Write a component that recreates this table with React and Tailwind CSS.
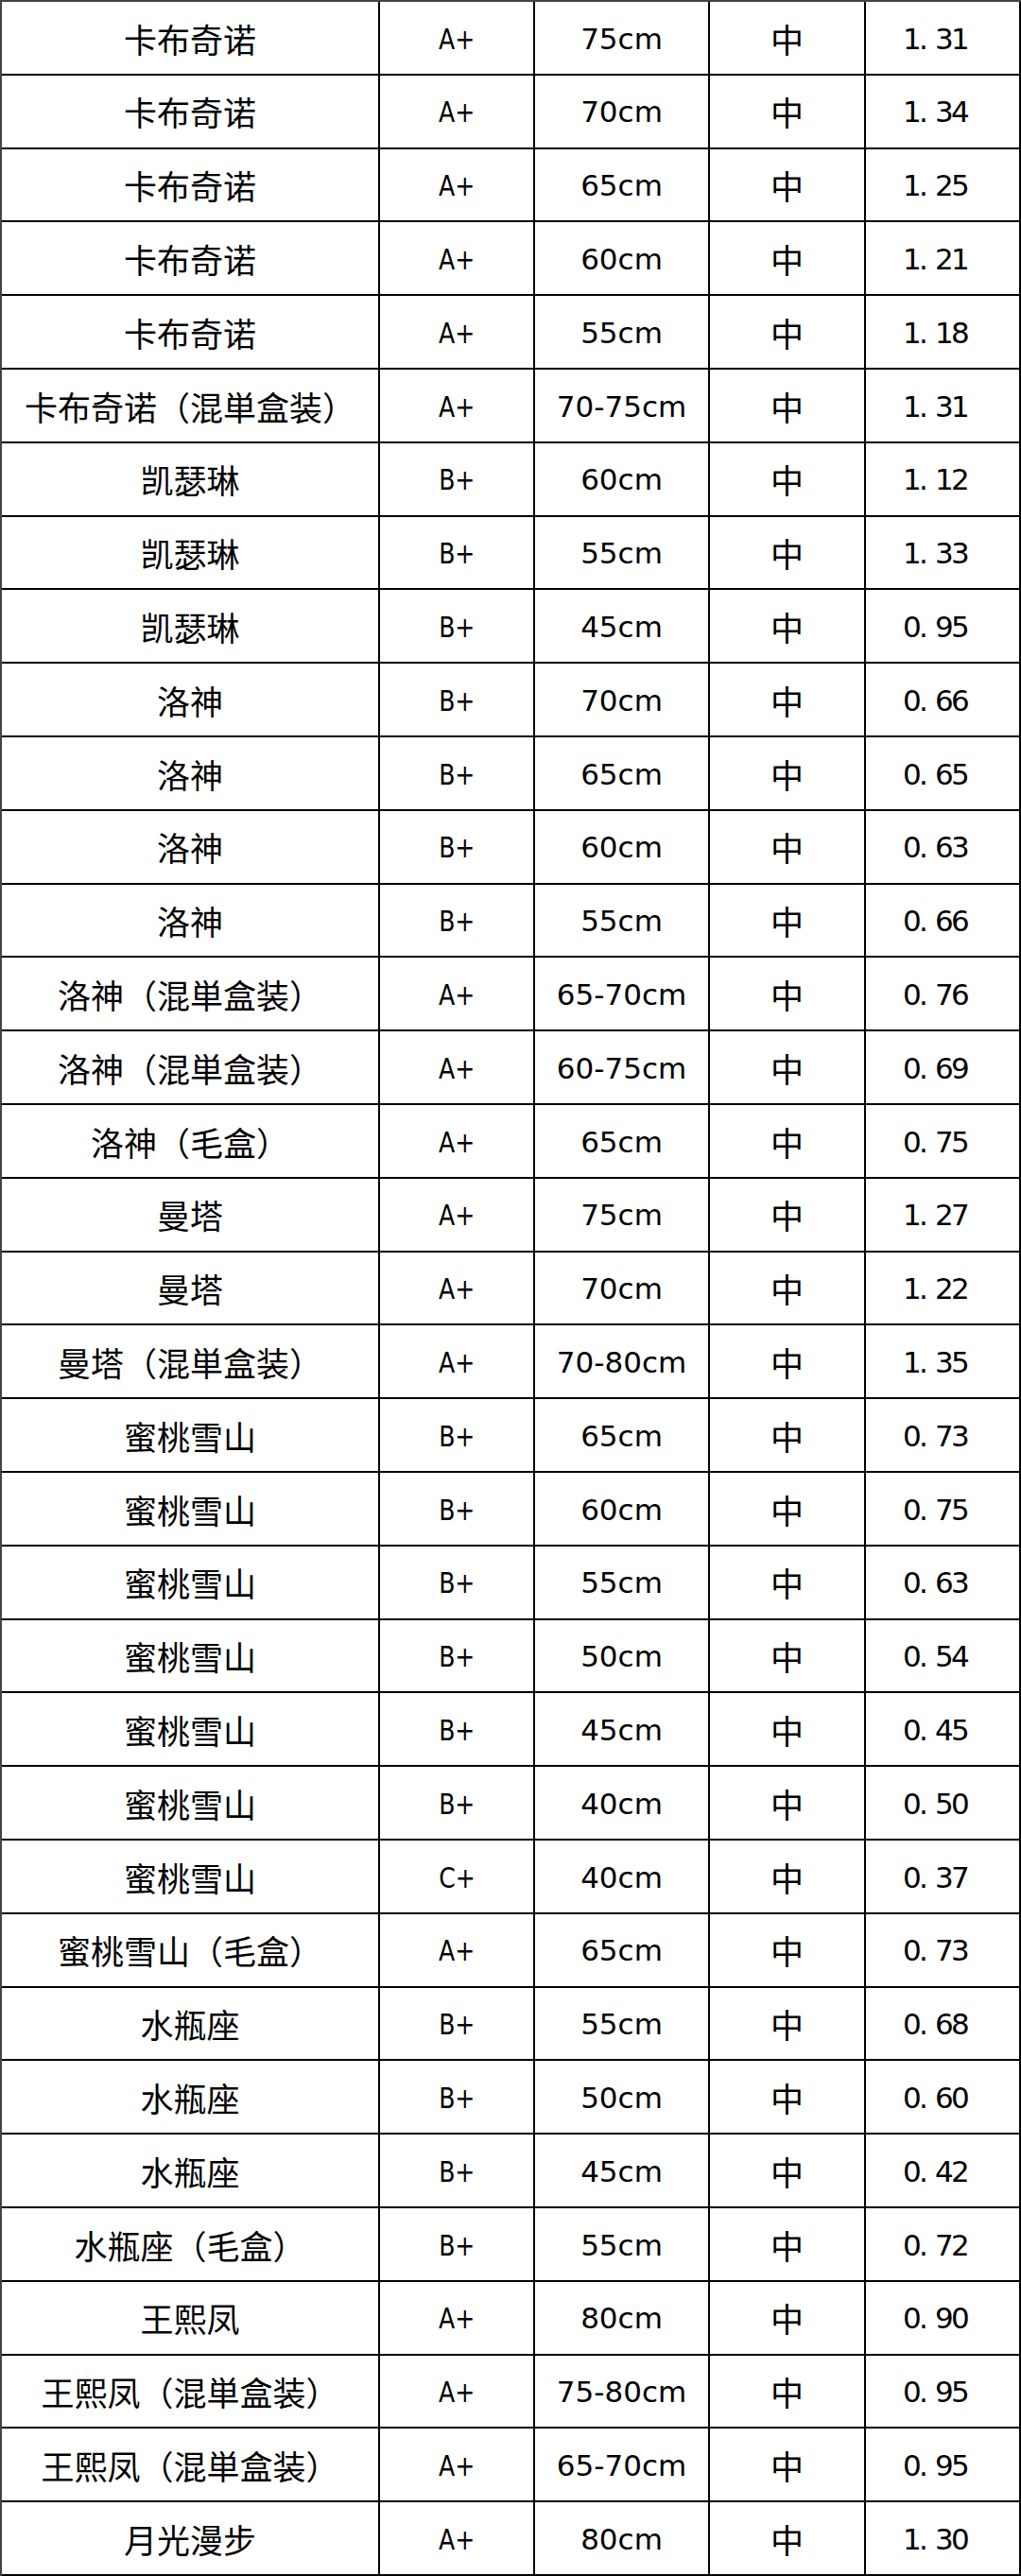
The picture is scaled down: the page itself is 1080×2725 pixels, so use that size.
const rows = [
  ["卡布奇诺", "A+", "75cm", "中", "1.31"],
  ["卡布奇诺", "A+", "70cm", "中", "1.34"],
  ["卡布奇诺", "A+", "65cm", "中", "1.25"],
  ["卡布奇诺", "A+", "60cm", "中", "1.21"],
  ["卡布奇诺", "A+", "55cm", "中", "1.18"],
  ["卡布奇诺（混単盒装）", "A+", "70-75cm", "中", "1.31"],
  ["凯瑟琳", "B+", "60cm", "中", "1.12"],
  ["凯瑟琳", "B+", "55cm", "中", "1.33"],
  ["凯瑟琳", "B+", "45cm", "中", "0.95"],
  ["洛神", "B+", "70cm", "中", "0.66"],
  ["洛神", "B+", "65cm", "中", "0.65"],
  ["洛神", "B+", "60cm", "中", "0.63"],
  ["洛神", "B+", "55cm", "中", "0.66"],
  ["洛神（混単盒装）", "A+", "65-70cm", "中", "0.76"],
  ["洛神（混単盒装）", "A+", "60-75cm", "中", "0.69"],
  ["洛神（毛盒）", "A+", "65cm", "中", "0.75"],
  ["曼塔", "A+", "75cm", "中", "1.27"],
  ["曼塔", "A+", "70cm", "中", "1.22"],
  ["曼塔（混単盒装）", "A+", "70-80cm", "中", "1.35"],
  ["蜜桃雪山", "B+", "65cm", "中", "0.73"],
  ["蜜桃雪山", "B+", "60cm", "中", "0.75"],
  ["蜜桃雪山", "B+", "55cm", "中", "0.63"],
  ["蜜桃雪山", "B+", "50cm", "中", "0.54"],
  ["蜜桃雪山", "B+", "45cm", "中", "0.45"],
  ["蜜桃雪山", "B+", "40cm", "中", "0.50"],
  ["蜜桃雪山", "C+", "40cm", "中", "0.37"],
  ["蜜桃雪山（毛盒）", "A+", "65cm", "中", "0.73"],
  ["水瓶座", "B+", "55cm", "中", "0.68"],
  ["水瓶座", "B+", "50cm", "中", "0.60"],
  ["水瓶座", "B+", "45cm", "中", "0.42"],
  ["水瓶座（毛盒）", "B+", "55cm", "中", "0.72"],
  ["王熙凤", "A+", "80cm", "中", "0.90"],
  ["王熙凤（混単盒装）", "A+", "75-80cm", "中", "0.95"],
  ["王熙凤（混単盒装）", "A+", "65-70cm", "中", "0.95"],
  ["月光漫步", "A+", "80cm", "中", "1.30"],
];

const cjk = "font-['Noto_Sans_CJK_SC',sans-serif]";
const cell = "flex items-center justify-center pt-[2px] border-r-2 border-b-2 border-black text-black";

const Mono = ({ text }) => (
  <span className="flex">
    {text.split("").map((ch, i) => (
      <span key={i} className="inline-block w-[17px] text-left">
        {ch}
      </span>
    ))}
  </span>
);

export default function App() {
  return (
    <div className="w-[1080px] h-[2725px] bg-white border-t-2 border-l-2 border-[#444] grid grid-cols-[400px_164px_185px_165px_1fr] grid-rows-[repeat(35,minmax(0,1fr))]">
      {rows.map((r, i) => (
        <div key={i} className="contents">
          <div className={`${cell} ${cjk} text-[35px]`}>{r[0]}</div>
          <div className={`${cell} font-['DejaVu_Sans_Condensed','DejaVu_Sans',sans-serif] text-[31px]`}>
            <span className="inline-block scale-x-90">{r[1]}</span>
          </div>
          <div className={`${cell} font-['DejaVu_Sans',sans-serif] text-[31px]`}>{r[2]}</div>
          <div className={`${cell} ${cjk} text-[35px]`}>{r[3]}</div>
          <div className={`${cell} font-['DejaVu_Sans',sans-serif] text-[31px] border-r-0 pr-[16px]`}>
            <Mono text={r[4]} />
          </div>
        </div>
      ))}
    </div>
  );
}
